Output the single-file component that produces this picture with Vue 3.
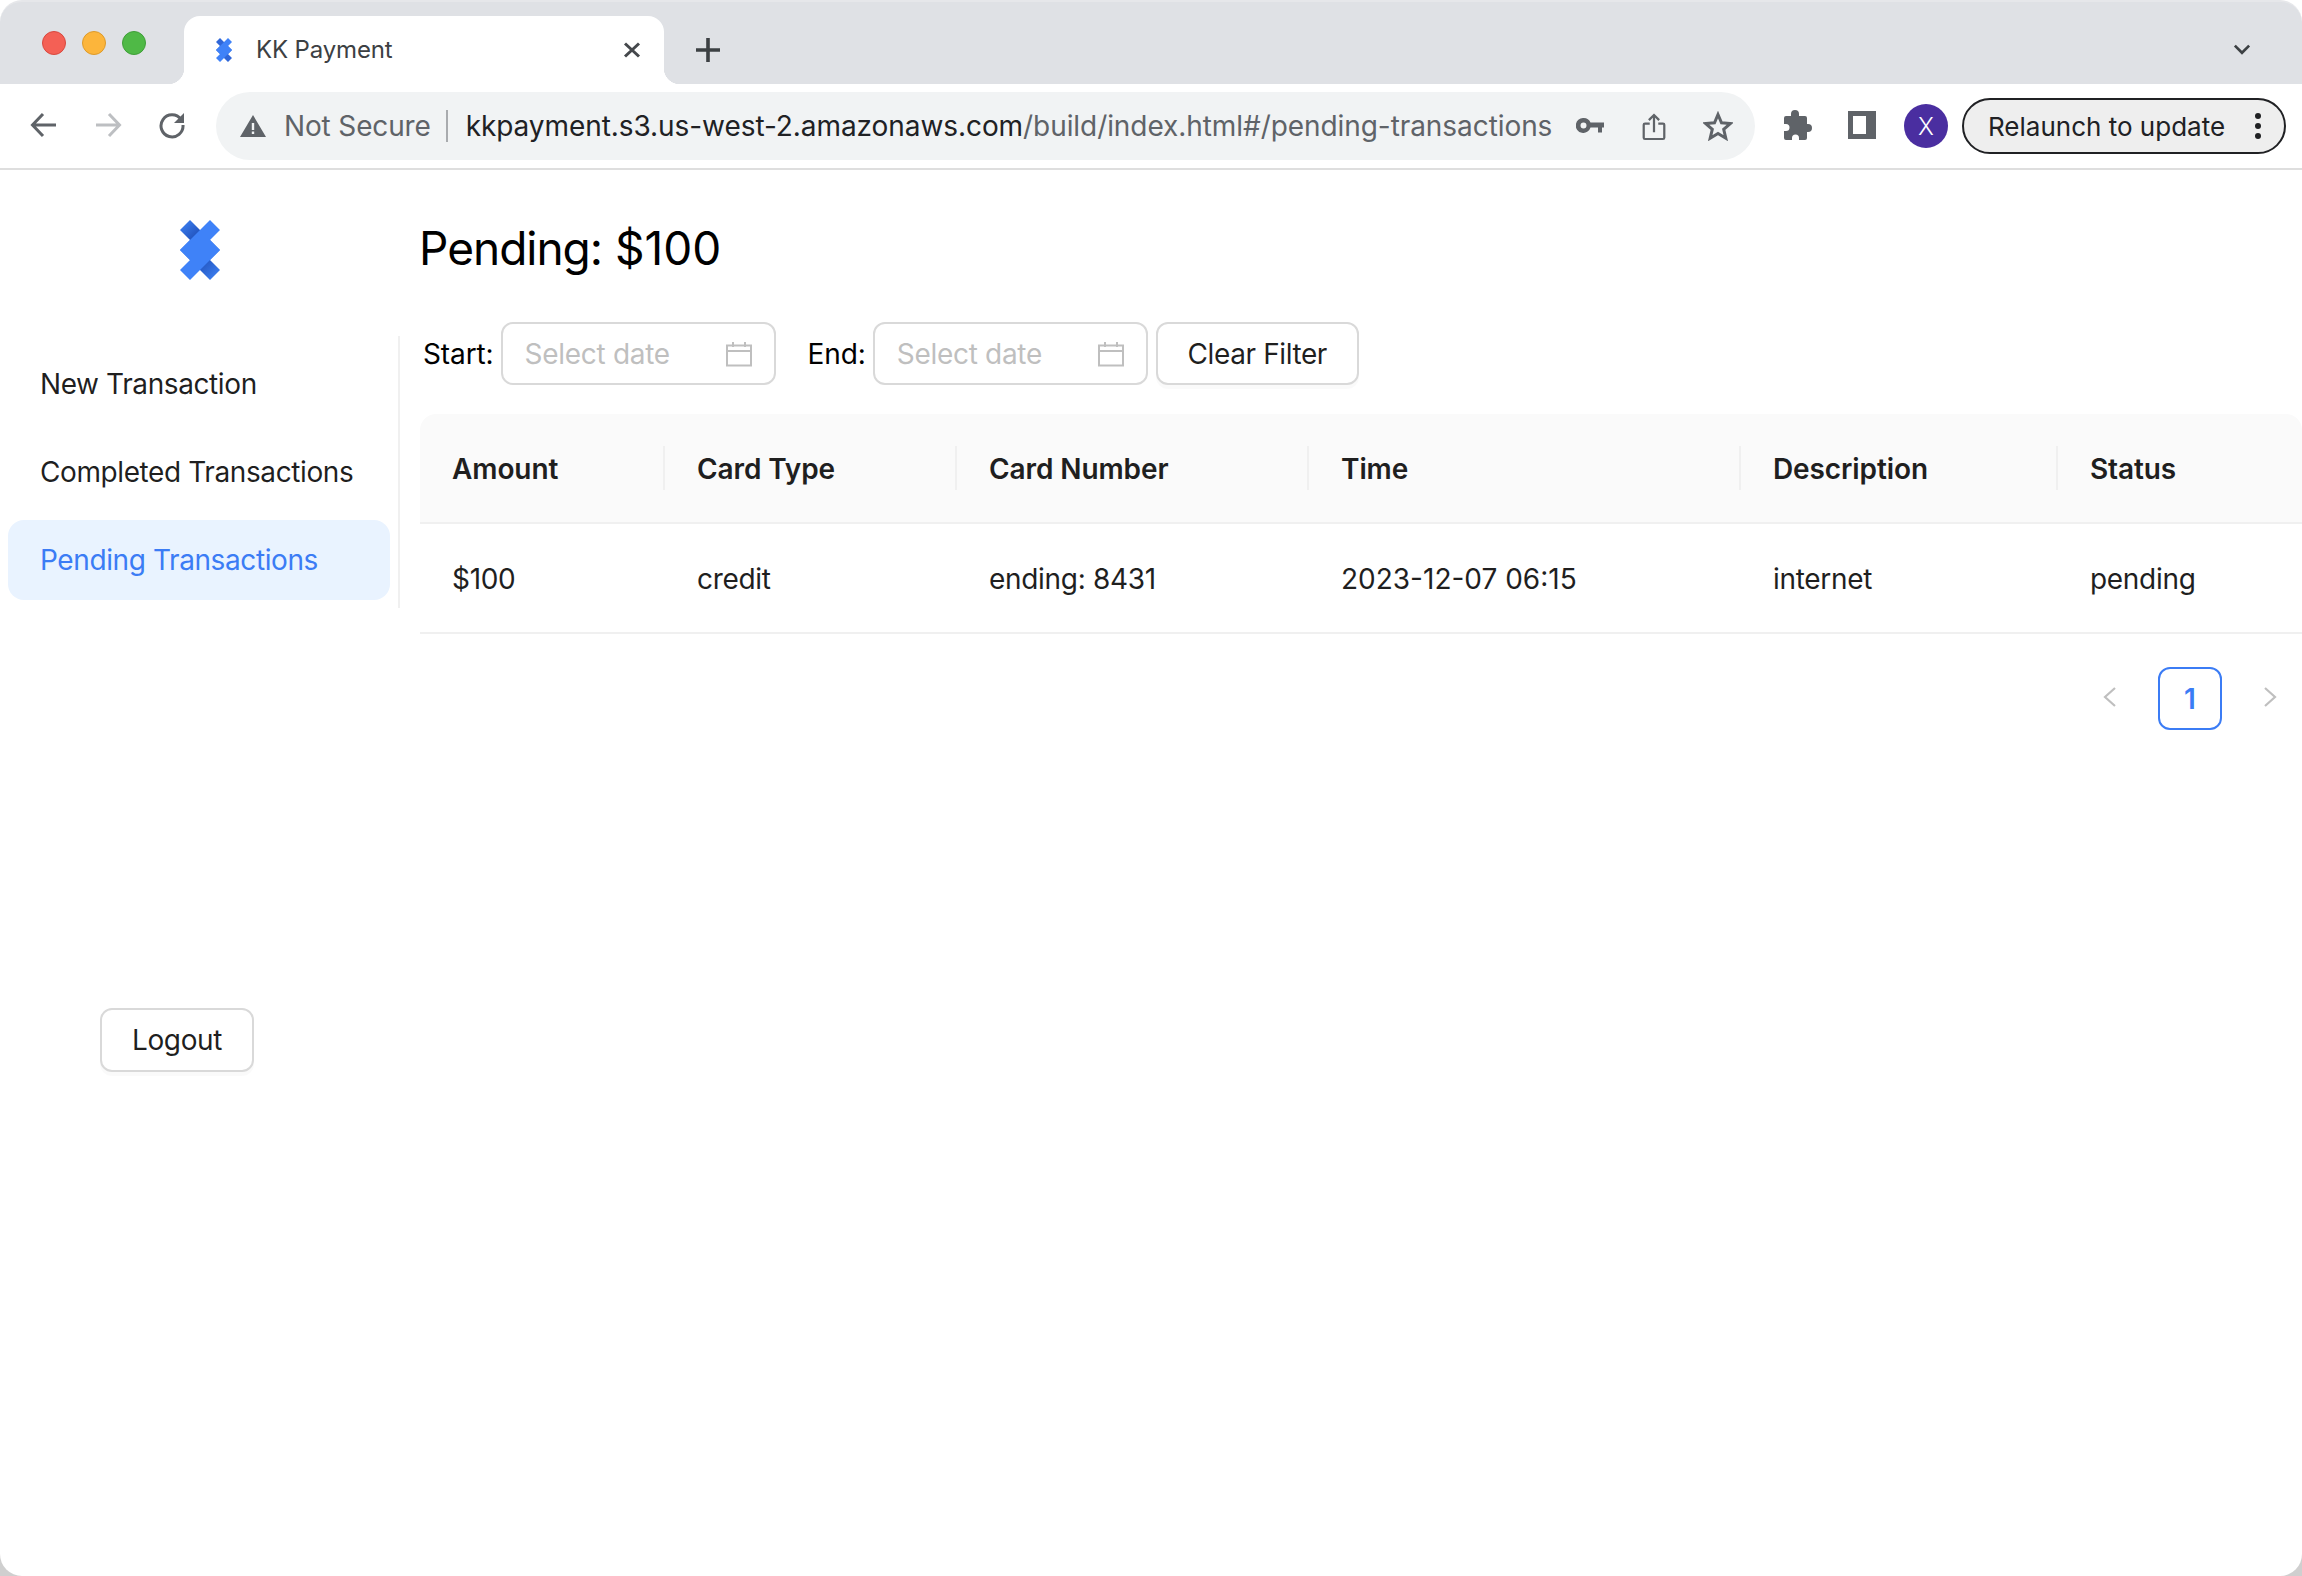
<script setup>
const columns = [
  { label: 'Amount', value: '$100', width: 245 },
  { label: 'Card Type', value: 'credit', width: 292 },
  { label: 'Card Number', value: 'ending: 8431', width: 352 },
  { label: 'Time', value: '2023-12-07 06:15', width: 432 },
  { label: 'Description', value: 'internet', width: 317 },
  { label: 'Status', value: 'pending', width: 244 },
]
const menu = [
  { label: 'New Transaction', active: false },
  { label: 'Completed Transactions', active: false },
  { label: 'Pending Transactions', active: true },
]
const filters = [{ label: 'Start:' }, { label: 'End:' }]
</script>

<template>
  <div class="page">
    <header class="tabstrip">
      <div class="lights">
        <span class="light red"></span>
        <span class="light yellow"></span>
        <span class="light green"></span>
      </div>
      <div class="tab">
        <svg class="tab-logo" viewBox="0 0 40 60">
          <path fill="#2f66d8" d="M10 0 0 10l30 30 10-10zM10 20 0 30l30 30 10-10z" />
          <path fill="#3f82f8" d="M30 0 40 10 10 40 0 30zM30 20 40 30 10 60 0 50z" />
        </svg>
        <span class="tab-title">KK Payment</span>
        <svg class="tab-close" viewBox="0 0 18 16">
          <path d="M2 1.500l14 13M16 1.500l-14 13" />
        </svg>
      </div>
      <svg class="new-tab" viewBox="0 0 24 24">
        <path d="M12 0v24M0 12h24" />
      </svg>
      <svg class="tab-menu" viewBox="0 0 16 10">
        <path d="M1.500 1.500 8 8l6.500-6.500" />
      </svg>
    </header>

    <div class="toolbar">
      <svg class="nav-icon" viewBox="0 0 28 28">
        <path d="M26 14H3M13 3 2.500 14 13 25" />
      </svg>
      <svg class="nav-icon off" viewBox="0 0 28 28">
        <path d="M2 14h23M15 3l10.500 11L15 25" />
      </svg>
      <svg class="nav-icon reload" viewBox="0 0 28 28">
        <path d="M23 8.500A11 11 0 1 0 25 14" />
        <path class="solid" d="M26 2v10H16z" />
      </svg>
      <div class="omnibox">
        <svg class="warn" viewBox="0 0 26 22">
          <path fill-rule="evenodd" d="M13 0 26 22H0zM11.800 8v7h2.400V8zM11.800 16.500v2.500h2.400v-2.500z" />
        </svg>
        <span class="not-secure">Not Secure</span>
        <span class="sep"></span>
        <span class="url">kkpayment.s3.us-west-2.amazonaws.com<span class="url-path">/build/index.html#/pending-transactions</span></span>
        <svg class="key" viewBox="0 0 28 15">
          <path fill-rule="evenodd" d="M7.500 0a7.500 7.500 0 0 1 7 4.500H28v5h-2v5h-4v-5h-7.500a7.500 7.500 0 1 1-7-9.500zM7.500 4.500a3 3 0 1 0 0 6 3 3 0 0 0 0-6z" />
        </svg>
        <svg class="share" viewBox="0 0 28 32">
          <path d="M9 12H3.500A1.500 1.500 0 0 0 2 13.500v15A1.500 1.500 0 0 0 3.500 30h21a1.500 1.500 0 0 0 1.500-1.500v-15a1.500 1.500 0 0 0-1.500-1.500H19M14 22V2M8 8l6-6 6 6" />
        </svg>
        <svg class="star" viewBox="0 0 30 30">
          <path d="M15 3.500 18.500 11.800 27.500 12.500 20.700 18.400 22.800 27.200 15 22.500 7.200 27.200 9.300 18.400 2.500 12.500 11.500 11.800z" />
        </svg>
      </div>
      <svg class="puzzle" viewBox="0 0 28 30">
        <path d="M11 0a4 4 0 0 1 4 4v2h6a2 2 0 0 1 2 2v6h1a4 4 0 0 1 0 8h-1v6a2 2 0 0 1-2 2h-6v-2a3.500 3.500 0 0 0-7 0v2H2a2 2 0 0 1-2-2v-7h2a3.500 3.500 0 0 0 0-7H0V8a2 2 0 0 1 2-2h5V4a4 4 0 0 1 4-4z" />
      </svg>
      <svg class="side" viewBox="0 0 28 28">
        <path fill-rule="evenodd" d="M0 0h28v28H0zM5 5v18h13V5z" />
      </svg>
      <span class="avatar">X</span>
      <div class="relaunch">
        <span>Relaunch to update</span>
        <span class="dots"><i></i><i></i><i></i></span>
      </div>
    </div>

    <div class="app">
      <aside class="sidebar">
        <div class="logo-wrap">
          <svg class="logo" viewBox="0 0 40 60">
            <defs>
              <linearGradient id="backA" x1="0" y1="0" x2="1" y2="1">
                <stop offset="0" stop-color="#4085f8" />
                <stop offset="0.38" stop-color="#2457c2" />
                <stop offset="0.55" stop-color="#2457c2" />
                <stop offset="1" stop-color="#4085f8" />
              </linearGradient>
            </defs>
            <path fill="url(#backA)" d="M10 0 0 10l30 30 10-10z" />
            <path fill="url(#backA)" d="M10 20 0 30l30 30 10-10z" />
            <path fill="#3f82f8" d="M30 0 40 10 10 40 0 30zM30 20 40 30 10 60 0 50z" />
          </svg>
        </div>
        <nav class="menu">
          <a v-for="item in menu" :key="item.label" class="menu-item" :class="{ active: item.active }">{{ item.label }}</a>
        </nav>
        <button class="btn logout">Logout</button>
      </aside>

      <main class="content">
        <h2 class="title"><span class="title-word">Pending:</span> $100</h2>
        <div class="filters">
          <template v-for="f in filters" :key="f.label">
            <label class="filter-label">{{ f.label }}</label>
            <div class="picker">
              <span class="placeholder">Select date</span>
              <svg class="cal" viewBox="0 0 26 26">
                <path d="M1 4.500h24v20H1zM1 10h24M7 1v5M19 1v5" />
              </svg>
            </div>
          </template>
          <button class="btn clear">Clear Filter</button>
        </div>

        <div class="table">
          <div class="thead">
            <div v-for="c in columns" :key="c.label" class="th" :style="{ width: c.width + 'px' }">{{ c.label }}</div>
          </div>
          <div class="tbody">
            <div v-for="c in columns" :key="c.label" class="td" :style="{ width: c.width + 'px' }">{{ c.value }}</div>
          </div>
        </div>

        <div class="pager">
          <span class="page-arrow">
            <svg viewBox="0 0 14 22"><path d="M12 2 2 11l10 9" /></svg>
          </span>
          <span class="page-num">1</span>
          <span class="page-arrow">
            <svg viewBox="0 0 14 22"><path d="M2 2l10 9-10 9" /></svg>
          </span>
        </div>
      </main>
    </div>
  </div>
</template>

<style>
html, body { margin: 0; background: #cfcfcf; }
</style>

<style scoped>
.page {
  width: 2302px;
  height: 1576px;
  overflow: hidden;
  font-family: Inter, "Noto Sans", sans-serif;
  color: #1f1f1f;
  background: #fff;
  border-radius: 0 0 22px 22px;
}
.tabstrip {
  height: 84px;
  box-sizing: border-box;
  background: #dfe1e5;
  border-radius: 22px 22px 0 0;
  border-top: 2px solid #e6e7ea;
  display: flex;
  align-items: flex-start;
  position: relative;
}
.lights {
  display: flex;
  gap: 16px;
  margin: 29px 0 0 42px;
  width: 142px;
}
.light {
  width: 24px;
  height: 24px;
  border-radius: 50%;
  box-sizing: border-box;
  border: 1px solid;
}
.red { background: #f46055; border-color: #d8483e; }
.yellow { background: #fcb53b; border-color: #dd9a2a; }
.green { background: #4fb946; border-color: #3f9e38; }
.tab {
  width: 480px;
  height: 68px;
  margin-top: 14px;
  background: #fff;
  border-radius: 16px 16px 0 0;
  display: flex;
  align-items: center;
  position: relative;
  box-sizing: border-box;
  padding: 0 23px 0 31px;
}
.tab::before,
.tab::after {
  content: "";
  position: absolute;
  bottom: 0;
  width: 16px;
  height: 16px;
}
.tab::before {
  left: -16px;
  background: radial-gradient(circle at 0 0, transparent 16px, #fff 16.5px);
}
.tab::after {
  right: -16px;
  background: radial-gradient(circle at 100% 0, transparent 16px, #fff 16.5px);
}
.tab-logo { width: 18px; height: 24px; }
.tab-title {
  margin-left: 23px;
  font-size: 24px;
  letter-spacing: -0.15px;
  color: #3c4043;
  flex: 1;
  line-height: 28px;
  margin-top: -1px;
}
.tab-close { width: 18px; height: 16px; fill: none; stroke: #45484c; stroke-width: 3; }
.new-tab {
  width: 24px;
  height: 24px;
  margin: 36px 0 0 32px;
  fill: none;
  stroke: #3c4043;
  stroke-width: 3.600;
}
.tab-menu {
  width: 18px;
  height: 11px;
  position: absolute;
  right: 51px;
  top: 42px;
  fill: none;
  stroke: #3c4043;
  stroke-width: 2.400;
}
.toolbar {
  height: 86px;
  box-sizing: border-box;
  border-bottom: 2px solid #dedede;
  display: flex;
  align-items: flex-start;
  position: relative;
  padding-left: 30px;
}
.nav-icon {
  width: 28px;
  height: 28px;
  margin: 27px 36px 0 0;
  flex: none;
  fill: none;
  stroke: #5f6368;
  stroke-width: 3;
}
.nav-icon.off { stroke: #bdbfc2; }
.nav-icon.reload { margin-right: 30px; }
.solid { fill: #5f6368; stroke: none; }
.omnibox {
  width: 1539px;
  height: 68px;
  margin-top: 8px;
  flex: none;
  background: #f1f3f4;
  border-radius: 34px;
  display: flex;
  align-items: center;
  box-sizing: border-box;
  padding-left: 24px;
  font-size: 28px;
  position: relative;
}
.warn { width: 26px; height: 22px; fill: #5f6368; flex: none; }
.not-secure { margin-left: 18px; color: #5f6368; white-space: nowrap; letter-spacing: -0.15px; }
.sep { width: 2px; height: 32px; background: #a9abae; margin: 0 18px 0 15px; flex: none; }
.url { color: #202124; white-space: nowrap; letter-spacing: -0.07px; }
.url-path { color: #5f6368; }
.key { position: absolute; left: 1360px; top: 26px; width: 28px; height: 15px; fill: #5f6368; }
.share { position: absolute; left: 1426px; top: 21px; width: 24px; height: 28px; fill: none; stroke: #5f6368; stroke-width: 2.600; }
.star { position: absolute; left: 1487px; top: 19px; width: 30px; height: 30px; fill: none; stroke: #5f6368; stroke-width: 3; }
.puzzle { width: 28px; height: 30px; margin: 26px 0 0 29px; fill: #5f6368; flex: none; }
.side { width: 28px; height: 28px; margin: 27px 0 0 36px; fill: #5f6368; flex: none; }
.avatar {
  width: 44px;
  height: 44px;
  margin: 20px 0 0 28px;
  flex: none;
  border-radius: 50%;
  background: #4a2ea0;
  color: #fff;
  font-size: 24px;
  font-weight: 300;
  display: flex;
  align-items: center;
  justify-content: center;
}
.relaunch {
  width: 324px;
  height: 56px;
  margin: 14px 0 0 14px;
  flex: none;
  box-sizing: border-box;
  border: 2px solid #202124;
  border-radius: 28px;
  background: #eeeeee;
  color: #202124;
  font-size: 26px;
  display: flex;
  align-items: center;
  padding-left: 24px;
  position: relative;
}
.dots {
  position: absolute;
  right: 23px;
  top: 13px;
  display: flex;
  flex-direction: column;
  gap: 4px;
}
.dots i { width: 6px; height: 6px; border-radius: 50%; background: #202124; display: block; }
.app { display: flex; align-items: flex-start; }
.sidebar { width: 400px; flex: none; display: flex; flex-direction: column; align-items: flex-start; }
.logo-wrap { width: 400px; height: 166px; display: flex; justify-content: center; padding-top: 50px; box-sizing: border-box; }
.logo { width: 40px; height: 60px; }
.menu {
  width: 400px;
  box-sizing: border-box;
  border-right: 2px solid #f0f0f0;
  padding: 8px;
  display: flex;
  flex-direction: column;
  gap: 8px;
}
.menu-item {
  height: 80px;
  line-height: 80px;
  padding-left: 32px;
  border-radius: 16px;
  font-size: 28px;
  letter-spacing: -0.4px;
  color: rgba(0, 0, 0, 0.88);
  width: 382px;
  box-sizing: border-box;
}
.menu-item.active { background: #e9f3ff; color: #3b7cf5; }
.btn {
  font: inherit;
  font-size: 28px;
  letter-spacing: -0.4px;
  color: rgba(0, 0, 0, 0.88);
  background: #fff;
  border: 2px solid #d9d9d9;
  border-radius: 12px;
  box-shadow: 0 4px 0 rgba(0, 0, 0, 0.02);
  height: 63px;
  box-sizing: border-box;
  padding: 0 30px;
}
.logout { margin: 400px 0 0 100px; width: 154px; height: 64px; padding: 0; }
.content { flex: 1; min-width: 0; padding-left: 20px; }
.title {
  margin: 0;
  height: 152px;
  box-sizing: border-box;
  padding-top: 49px;
  font-size: 46px;
  line-height: 58px;
  font-weight: 400;
  color: #000;
  text-indent: -1px;
}
.title-word { letter-spacing: -1px; }
.filters { display: flex; align-items: center; height: 63px; }
.filter-label { font-size: 28px; letter-spacing: -0.1px; color: #000; margin-left: 3px; margin-right: 7px; }
.picker {
  width: 275px;
  height: 63px;
  box-sizing: border-box;
  border: 2px solid #d9d9d9;
  border-radius: 12px;
  display: flex;
  align-items: center;
  justify-content: space-between;
  padding: 0 22px;
  margin-right: 29px;
}
.picker:nth-of-type(2) { margin-right: 8px; }
.placeholder { font-size: 28px; letter-spacing: -0.3px; color: #bfbfbf; }
.cal { width: 26px; height: 26px; fill: none; stroke: #bfbfbf; stroke-width: 2; }
.clear { width: 203px; padding: 0; }
.table { margin-top: 29px; }
.thead {
  display: flex;
  height: 110px;
  box-sizing: border-box;
  background: #fafafa;
  border-bottom: 2px solid #f0f0f0;
  border-radius: 16px 16px 0 0;
}
.th {
  box-sizing: border-box;
  padding-left: 32px;
  line-height: 110px;
  font-size: 28px;
  letter-spacing: -0.1px;
  font-weight: 600;
  position: relative;
  flex: none;
}
.th:not(:last-child)::after {
  content: "";
  position: absolute;
  right: 0;
  top: 32px;
  width: 2px;
  height: 44px;
  background: #f0f0f0;
}
.tbody {
  display: flex;
  height: 110px;
  box-sizing: border-box;
  border-bottom: 2px solid #f0f0f0;
}
.td {
  box-sizing: border-box;
  padding-left: 32px;
  line-height: 110px;
  font-size: 28px;
  letter-spacing: -0.3px;
  flex: none;
}
.td:nth-child(4) { letter-spacing: 0; }
.pager { display: flex; justify-content: flex-end; gap: 16px; margin-top: 33px; }
.page-arrow { width: 64px; height: 63px; display: flex; align-items: center; justify-content: center; padding-bottom: 4px; box-sizing: border-box; }
.page-arrow svg { width: 14px; height: 22px; fill: none; stroke: #bfbfbf; stroke-width: 2.200; }
.page-num {
  width: 64px;
  height: 63px;
  box-sizing: border-box;
  border: 2px solid #3b7cf5;
  border-radius: 12px;
  color: #3b7cf5;
  font-size: 28px;
  font-weight: 600;
  display: flex;
  align-items: center;
  justify-content: center;
}
</style>
